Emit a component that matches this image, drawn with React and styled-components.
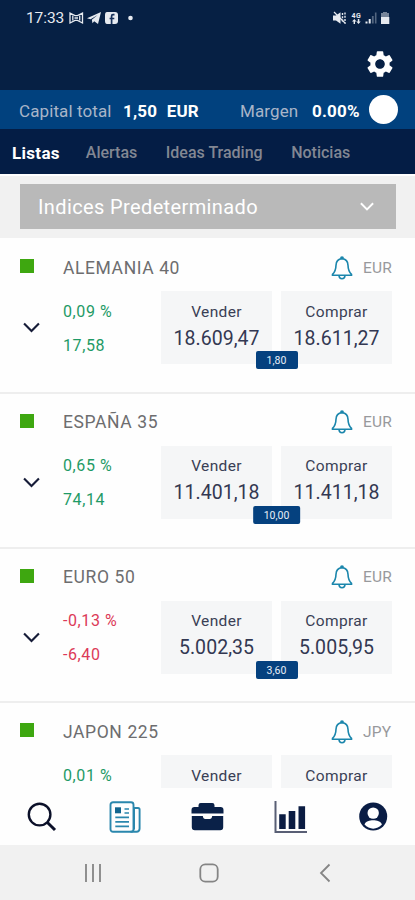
import { useState } from "react";
import { styled, createGlobalStyle } from "styled-components";
import { MdSettings } from "react-icons/md";

const GlobalStyle = createGlobalStyle`
  * {
    box-sizing: border-box;
  }
  body {
    margin: 0;
    background: #fff;
    font-family: Roboto, "Liberation Sans", sans-serif;
  }
`;

const Screen = styled.div`
  display: flex;
  flex-direction: column;
  width: 415px;
  height: 900px;
  overflow: hidden;
  background: #fefefe;
`;

const StatusBar = styled.div`
  display: flex;
  justify-content: space-between;
  align-items: center;
  height: 35px;
  padding: 0 24px 0 26px;
  background: #062044;
  color: #e6eaf0;
`;

const Clock = styled.span`
  width: 43px;
  font-size: 15.5px;
  letter-spacing: -0.1px;
  white-space: nowrap;
`;

const StatusGroup = styled.div`
  display: flex;
  align-items: center;
`;

const TopBar = styled.div`
  display: flex;
  justify-content: flex-end;
  align-items: center;
  height: 55px;
  padding: 2px 19px 0 0;
  background: #062044;
  color: #fff;
`;

const CapitalBar = styled.div`
  display: flex;
  align-items: center;
  height: 39px;
  padding: 2px 17px 0 19px;
  background: #01417e;
  white-space: nowrap;
`;

const CapitalLabel = styled.span`
  width: ${(props) => props.$width}px;
  font-size: 17px;
  letter-spacing: 0.1px;
  color: #a9b5c8;
`;

const CapitalValue = styled.span`
  width: ${(props) => props.$width}px;
  font-size: 17px;
  font-weight: 700;
  letter-spacing: 0.2px;
  word-spacing: 5px;
  color: #fff;
`;

const Toggle = styled.span`
  width: 29px;
  height: 29px;
  margin-top: -2px;
  border-radius: 50%;
  background: #fff;
`;

const Tabs = styled.nav`
  display: flex;
  align-items: center;
  gap: 28.5px;
  height: 45px;
  padding: 2px 0 0 12px;
  background: #041d45;
`;

const Tab = styled.button`
  padding: 0;
  border: 0;
  background: none;
  font-family: inherit;
  font-size: ${(props) => (props.$active ? 17 : 16)}px;
  font-weight: ${(props) => (props.$active ? 700 : 500)};
  letter-spacing: ${(props) => (props.$active ? 0.3 : 0)}px;
  color: ${(props) => (props.$active ? "#fff" : "#828793")};
  white-space: nowrap;

  &:first-child {
    margin-right: -2.5px;
  }
`;

const FilterArea = styled.div`
  height: 64px;
  padding: 10px 19px 0 20px;
  border-top: 2px solid #fff;
  background: #f1f1f1;
`;

const Select = styled.div`
  display: flex;
  justify-content: space-between;
  align-items: center;
  height: 45px;
  margin-top: -2px;
  padding: 0 22px 0 18px;
  background: #b9b9b9;
  color: #fff;
  font-size: 20px;
  letter-spacing: 0.38px;
`;

const List = styled.div`
  height: 550px;
  padding-top: 1.3px;
  overflow: hidden;
`;

const Row = styled.section`
  height: 154.67px;
  border-bottom: 2px solid #eeeeee;
`;

const RowHead = styled.div`
  display: flex;
  align-items: center;
  height: 52px;
  padding: 5px 22px 0 20px;
`;

const Market = styled.span`
  width: 14px;
  height: 14px;
  margin: -3px 29px 0 0;
  background: #3ea710;
`;

const Name = styled.span`
  flex: 1;
  font-size: 17.5px;
  letter-spacing: 0.6px;
  color: #6d6d6f;
`;

const Currency = styled.span`
  width: 30px;
  margin-left: 10px;
  font-size: 15.5px;
  letter-spacing: 0.2px;
  color: #98999c;
`;

const RowBody = styled.div`
  position: relative;
  display: grid;
  grid-template-columns: 63px 98px 111px 120px;
  height: 73px;
`;

const Expand = styled.button`
  display: flex;
  justify-content: center;
  align-items: center;
  padding: 0;
  border: 0;
  background: none;
`;

const Change = styled.div`
  display: flex;
  flex-direction: column;
  gap: 14px;
  padding-top: 10.5px;
  font-size: 16px;
  line-height: 20px;
  letter-spacing: 0.6px;
  color: ${(props) => (props.$down ? "#dc3a58" : "#1f9a66")};
`;

const PriceBox = styled.div`
  width: 111px;
  height: 73px;
  margin-left: ${(props) => props.$gap || 0}px;
  padding-top: 10.5px;
  background: #f5f6f7;
  text-align: center;
  color: #3a3f55;
`;

const Side = styled.div`
  font-size: 15.5px;
  line-height: 20px;
  letter-spacing: 0.35px;
`;

const Price = styled.div`
  margin-top: 5px;
  font-size: 19.5px;
  line-height: 24px;
  letter-spacing: 0.05px;
  color: #333852;
`;

const Spread = styled.span`
  position: absolute;
  left: 276.5px;
  top: 60px;
  min-width: 42px;
  height: 18px;
  padding: 0 11px;
  transform: translateX(-50%);
  border-radius: 2px;
  background: #05417f;
  color: #e9eff8;
  font-size: 10.5px;
  line-height: 19px;
  text-align: center;
`;

const BottomNav = styled.nav`
  display: grid;
  grid-template-columns: repeat(5, 83px);
  align-items: center;
  justify-items: center;
  height: 57px;
  background: #fefefe;
`;

const SystemNav = styled.div`
  display: grid;
  grid-template-columns: repeat(3, 116px);
  align-items: center;
  justify-items: center;
  height: 55px;
  padding-left: 34.5px;
  background: #f1f1f1;
`;

function Chevron({ width, height, color, stroke }) {
  return (
    <svg width={width} height={height} viewBox="0 0 16 10" fill="none">
      <path d="M1 1.3L8 8.3L15 1.3" stroke={color} strokeWidth={stroke} />
    </svg>
  );
}

function BellIcon() {
  return (
    <svg width="22" height="24" viewBox="0 0 22 24" fill="none" stroke="#1b86ac" strokeWidth="1.6">
      <path d="M11 2.6C7 3 5.1 5.8 5 9.2C4.9 13.5 4.4 15.6 1.5 18.3V19.2H20.5V18.3C17.6 15.6 17.1 13.5 17 9.2C16.9 5.8 15 3 11 2.6Z" />
      <path d="M9.8 2.5C9.8 0.6 12.2 0.6 12.2 2.5" />
      <path d="M8 19.5C8.2 23.8 13.8 23.8 14 19.5" />
    </svg>
  );
}

function StatusLeftIcons() {
  return (
    <svg width="66" height="16" viewBox="0 0 66 16" fill="currentColor">
      <path d="M1 3L6 5.6H8.5L13.5 3V13L8.5 10.4H6L1 13Z" fill="none" stroke="currentColor" strokeWidth="1.3" />
      <path d="M3.8 5.5V10.5M10.7 5.5V10.5M5.5 8H9" stroke="currentColor" strokeWidth="1.3" />
      <path d="M18 8.3L32 2L29 14L25.2 11.2L23.5 13.3L22.8 9.8L28.7 5.1L21.6 9.2Z" />
      <path d="M38 2H46Q49 2 49 5V11Q49 14 46 14H38Q36 14 36 11V5Q36 2 38 2Z" />
      <path d="M45.5 4.6H44Q42.6 4.6 42.6 6V14M40.6 8.5H45.3" stroke="#17315a" strokeWidth="1.7" fill="none" />
      <circle cx="61.5" cy="8" r="2.3" />
    </svg>
  );
}

function StatusRightIcons() {
  return (
    <svg width="58" height="14" viewBox="0 0 58 14" fill="currentColor">
      <path d="M0 4.5H3L7.5 1.2V12.8L3 9.5H0Z" />
      <path d="M1 1L12.5 12.5" stroke="currentColor" strokeWidth="1.2" />
      <path d="M9.5 2V12M12 1.5V12.5" stroke="currentColor" strokeWidth="1.4" strokeDasharray="2 1.3" />
      <text x="18.4" y="6.5" fontSize="7" fontWeight="700" textLength="9.5">4G</text>
      <path d="M21.3 8L23.5 10.5H22V13H20.6V10.5H19ZM25.5 13L23.4 10.5H24.8V8H26.3V10.5H27.7Z" />
      <path d="M32.5 10.5H34.5V12.5H32.5ZM35.7 8H37.7V12.5H35.7Z" />
      <path d="M38.9 5H40.7V12.5H38.9ZM41.9 1.5H43.5V12.5H41.9Z" opacity="0.35" />
      <path d="M50 1H54V2H56V6H48V2H50Z" opacity="0.5" />
      <path d="M48 6H56.3V13H48Z" />
    </svg>
  );
}

function SearchIcon() {
  return (
    <svg width="30" height="30" viewBox="0 0 30 30" fill="none" stroke="#0b1029">
      <circle cx="12.6" cy="12.6" r="10.8" strokeWidth="2.4" />
      <path d="M20.2 20.2L28 28" strokeWidth="3" />
    </svg>
  );
}

function NewsIcon() {
  return (
    <svg width="32" height="32" viewBox="0 0 32 32" fill="none" stroke="#2a87ad" strokeWidth="1.9">
      <rect x="1.5" y="1.3" width="23" height="29.4" rx="2.5" />
      <path d="M24.5 7H29Q30.6 7 30.6 8.6V27.5Q30.6 30.7 27.5 30.7H21.5" />
      <path d="M25.4 8V28.5" strokeWidth="1.2" />
      <rect x="6" y="6.3" width="6" height="6" fill="#12668f" stroke="none" />
      <path d="M15.5 8H20M15.5 12H20M6.3 16.3H20M6.3 20.8H20M6.3 25.3H20" strokeWidth="1.7" />
    </svg>
  );
}

function BriefcaseIcon() {
  return (
    <svg width="33" height="29" viewBox="0 0 33 29" fill="#0a2148">
      <path d="M7.5 5V3.2Q7.5 1 9.7 1H21.3Q23.5 1 23.5 3.2V5H29.5Q32.5 5 32.5 8V11.6H0.5V8Q0.5 5 3.5 5Z" />
      <path d="M0.8 14H11.8Q12.2 17 14.2 17H18.8Q20.8 17 21.2 14H32.2V25.2Q32.2 28.2 29.2 28.2H3.8Q0.8 28.2 0.8 25.2Z" />
    </svg>
  );
}

function ChartIcon() {
  return (
    <svg width="34" height="34" viewBox="0 0 34 34">
      <path d="M1.5 1V32H33" fill="none" stroke="#595f75" strokeWidth="2" />
      <path d="M5.2 14.2H11.7V29H5.2ZM14.7 11H21.3V29H14.7ZM24.5 6.2H31.1V29H24.5Z" fill="#0b1c42" />
    </svg>
  );
}

function ProfileIcon() {
  return (
    <svg width="30" height="29" viewBox="0 0 30 29">
      <circle cx="14.2" cy="14.5" r="14" fill="#0a1d45" />
      <circle cx="14.2" cy="11.1" r="5.7" fill="#fff" />
      <path d="M5.5 22.6C6.3 19.4 10.7 18.3 14.2 18.3S22.1 19.4 22.9 22.6C18.2 28 10.2 28 5.5 22.6Z" fill="#fff" />
    </svg>
  );
}

const tabs = ["Listas", "Alertas", "Ideas Trading", "Noticias"];

const markets = [
  { name: "ALEMANIA 40", currency: "EUR", percent: "0,09 %", change: "17,58", sell: "18.609,47", buy: "18.611,27", spread: "1,80" },
  { name: "ESPAÑA 35", currency: "EUR", percent: "0,65 %", change: "74,14", sell: "11.401,18", buy: "11.411,18", spread: "10,00" },
  { name: "EURO 50", currency: "EUR", percent: "-0,13 %", change: "-6,40", sell: "5.002,35", buy: "5.005,95", spread: "3,60", down: true },
  // the last row is cut off by the bottom navigation
  { name: "JAPON 225", currency: "JPY", percent: "0,01 %" },
];

function MarketRow({ market }) {
  return (
    <Row>
      <RowHead>
        <Market />
        <Name>{market.name}</Name>
        <BellIcon />
        <Currency>{market.currency}</Currency>
      </RowHead>
      <RowBody>
        <Expand type="button">
          {market.change && <Chevron width={17} height={11} color="#161c38" stroke={2} />}
        </Expand>
        <Change $down={market.down}>
          <span>{market.percent}</span>
          <span>{market.change}</span>
        </Change>
        <PriceBox>
          <Side>Vender</Side>
          <Price>{market.sell}</Price>
        </PriceBox>
        <PriceBox $gap={9}>
          <Side>Comprar</Side>
          <Price>{market.buy}</Price>
        </PriceBox>
        {market.spread && <Spread>{market.spread}</Spread>}
      </RowBody>
    </Row>
  );
}

export default function App() {
  const [activeTab, setActiveTab] = useState("Listas");

  return (
    <Screen>
      <GlobalStyle />
      <StatusBar>
        <StatusGroup>
          <Clock>17:33</Clock>
          <StatusLeftIcons />
        </StatusGroup>
        <StatusRightIcons />
      </StatusBar>
      <TopBar>
        <MdSettings size={32} />
      </TopBar>
      <CapitalBar>
        <CapitalLabel $width={104}>Capital total</CapitalLabel>
        <CapitalValue $width={117}>1,50 EUR</CapitalValue>
        <CapitalLabel $width={72}>Margen</CapitalLabel>
        <CapitalValue $width={57}>0.00%</CapitalValue>
        <Toggle />
      </CapitalBar>
      <Tabs>
        {tabs.map((tab) => (
          <Tab key={tab} type="button" $active={tab === activeTab} onClick={() => setActiveTab(tab)}>
            {tab}
          </Tab>
        ))}
      </Tabs>
      <FilterArea>
        <Select>
          Indices Predeterminado
          <Chevron width={14} height={9} color="#fff" stroke={2.2} />
        </Select>
      </FilterArea>
      <List>
        {markets.map((market) => (
          <MarketRow key={market.name} market={market} />
        ))}
      </List>
      <BottomNav>
        <SearchIcon />
        <NewsIcon />
        <BriefcaseIcon />
        <ChartIcon />
        <ProfileIcon />
      </BottomNav>
      <SystemNav>
        <svg width="18" height="20" viewBox="0 0 18 20" stroke="#858585" strokeWidth="1.8">
          <path d="M2 1V19M9 1V19M16 1V19" />
        </svg>
        <svg width="20" height="20" viewBox="0 0 20 20" fill="none" stroke="#858585" strokeWidth="1.8">
          <rect x="1.3" y="1.3" width="17.4" height="17.4" rx="5" />
        </svg>
        <svg width="12" height="20" viewBox="0 0 12 20" fill="none" stroke="#858585" strokeWidth="1.8">
          <path d="M10.5 1.5L2 10L10.5 18.5" />
        </svg>
      </SystemNav>
    </Screen>
  );
}
